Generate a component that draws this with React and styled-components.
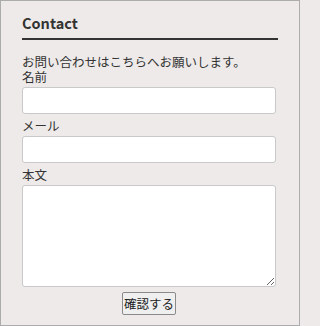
import React from "react";
import styled, { createGlobalStyle } from "styled-components";

const Global = createGlobalStyle`
  html, body { margin: 0; padding: 0; background: #eeeae9; }
  * { box-sizing: border-box; }
`;

const Panel = styled.form`
  width: 300px;
  height: 326px;
  border: 1px solid #acacac;
  background: #eeeae9;
  padding: 12px 21px 0 21px;
  font-family: "Noto Sans CJK JP", "Noto Sans", sans-serif;
  color: #333;
  display: flex;
  flex-direction: column;
`;

const Title = styled.h2`
  margin: 0;
  font-size: 14.5px;
  font-weight: 700;
  line-height: 20px;
  padding-bottom: 5px;
  border-bottom: 2px solid #333;
  color: #333;
`;

const Intro = styled.p`
  margin: 14px 0 0 0;
  font-size: 12.5px;
  line-height: 15px;
`;

const Label = styled.label`
  display: block;
  font-size: 12.5px;
  line-height: 15px;
  margin-top: ${(p) => (p.$first ? "0" : "4px")};
`;

const Input = styled.input`
  display: block;
  width: 254px;
  height: 27px;
  margin-top: 3px;
  border: 1px solid #c9c9c9;
  border-radius: 3px;
  background: #fff;
  font-family: inherit;
  font-size: 12.5px;
  padding: 2px 4px;
  outline: none;
`;

const TextArea = styled.textarea`
  display: block;
  width: 254px;
  height: 102px;
  margin-top: 3px;
  border: 1px solid #c9c9c9;
  border-radius: 3px;
  background: #fff;
  font-family: inherit;
  font-size: 12.5px;
  padding: 2px 4px;
  outline: none;
`;

const Actions = styled.div`
  display: flex;
  justify-content: center;
  margin-top: 5px;
  padding-right: 2px;
`;

const Button = styled.button`
  height: 23px;
  padding: 0 1px;
  border: 1px solid #8a8a8a;
  border-radius: 2px;
  background: #efefef;
  color: #222;
  font-family: "Noto Sans CJK JP", sans-serif;
  font-size: 12.5px;
  line-height: 19px;
  cursor: pointer;
`;

export default function App() {
  return (
    <>
      <Global />
      <Panel onSubmit={(e) => e.preventDefault()}>
        <Title>Contact</Title>
        <Intro>お問い合わせはこちらへお願いします。</Intro>
        <Label $first>名前</Label>
        <Input type="text" />
        <Label>メール</Label>
        <Input type="email" />
        <Label>本文</Label>
        <TextArea />
        <Actions>
          <Button type="submit">確認する</Button>
        </Actions>
      </Panel>
    </>
  );
}
